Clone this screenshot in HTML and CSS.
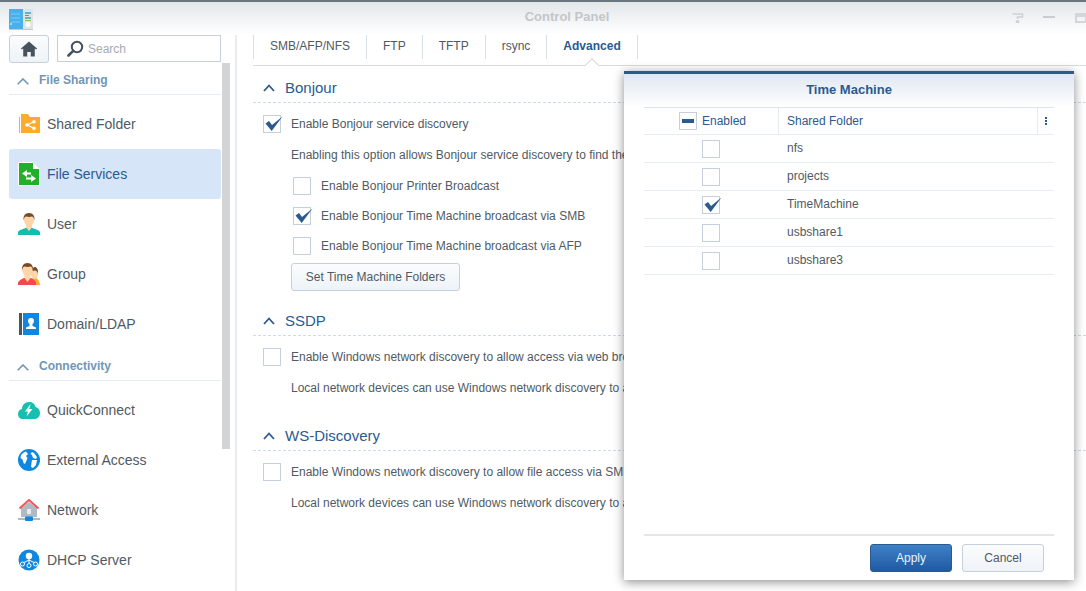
FILE: index.html
```html
<!DOCTYPE html>
<html lang="en">
<head>
<meta charset="utf-8">
<title>Control Panel</title>
<link rel="stylesheet" href="styles.css">
</head>
<body>
<div class="window">
  <header class="titlebar">
    <svg class="app-icon" width="24" height="21" viewBox="0 0 24 21">
      <rect x="0" y="0" width="24" height="20" fill="#dfe3e6"/>
      <rect x="0" y="0" width="14" height="20" fill="#49b0ea"/>
      <path d="M2 5h9M2 9h9M2 13h9" stroke="#7fcbf2" stroke-width="1"/>
      <rect x="1" y="14" width="2" height="2" fill="#9adcf7"/>
      <rect x="16" y="3" width="6" height="2" fill="#53b7d8"/>
      <rect x="16" y="6" width="4" height="1" fill="#7b8a92"/>
      <rect x="16" y="8" width="6" height="2" fill="#5fb8c8"/>
      <rect x="16" y="11" width="6" height="1" fill="#8bc34a"/>
      <circle cx="19" cy="15.500" r="2.500" fill="#fafcfc"/>
      <rect x="0" y="20" width="24" height="1" fill="#c3c9cd"/>
    </svg>
    <h1 class="title">Control Panel</h1>
    <div class="win-buttons">
      <svg width="12" height="10" viewBox="0.500 0 12 10"><path d="M1 1h10v3H6v2M5 8h2v2H5z" fill="none" stroke="#cdd0d3" stroke-width="1.500"/></svg>
      <svg class="win-min" width="12" height="2" viewBox="0 0 12 2"><rect width="12" height="2" fill="#c9ccd0"/></svg>
      <svg class="win-max" width="12" height="10" viewBox="0 0 12 10"><path d="M0 0h12v10H0z M2 4v4h8V4z" fill="#d3d6d9" fill-rule="evenodd"/></svg>
    </div>
  </header>

  <div class="body">
    <aside class="sidebar">
      <div class="tools">
        <button class="home" type="button" aria-label="Home">
          <svg width="16" height="16" viewBox="0 0 18 17"><path d="M9 0 0 8l1 1.200L2.500 8v9h4.500v-5h4v5h4.500V8L17 9.200 18 8z" fill="#46525e"/></svg>
        </button>
        <label class="search">
          <svg width="17" height="17" viewBox="0 0 17 17"><circle cx="10" cy="7" r="5.200" fill="none" stroke="#46525e" stroke-width="2"/><path d="M6.200 10.800 1.500 15.500" stroke="#46525e" stroke-width="2.600" stroke-linecap="round"/></svg>
          <span>Search</span>
        </label>
      </div>

      <div class="group-head">
        <svg class="chev-small" width="12" height="7" viewBox="0 0 12 7"><path d="M.7 6.300 6 1l5.300 5.300" fill="none" stroke="#6f97b8" stroke-width="1.600"/></svg>
        <span>File Sharing</span>
      </div>
      <a class="item">
        <svg width="22" height="22" viewBox="0 0 22 22"><path d="M0 4h1v16h21V4H12L10 1H3v3z" fill="#fbab2e"/><path d="M2 3h1v17H2z" fill="#fff"/><g fill="#fff"><circle cx="9" cy="12" r="1.800"/><circle cx="16" cy="8.800" r="1.800"/><circle cx="16" cy="15.200" r="1.800"/></g><path d="M9 12l7-3.200M9 12l7 3.200" stroke="#fff" stroke-width="1.200"/></svg>
        <span>Shared Folder</span>
      </a>
      <a class="item active">
        <svg width="22" height="24" viewBox="0 0 22 24"><path d="M.5.500h14l7 7v16H.500z" fill="#22b02a" stroke="#fff"/><path d="M15 .500v6.500h6.500z" fill="#fff"/><path d="M4 11.500 9 8v2.500h4v2H9V15z" fill="#fff"/><path d="M18 16.500 13 13v2.500H8v2h5V20z" fill="#fff"/></svg>
        <span>File Services</span>
      </a>
      <a class="item">
        <svg width="22" height="22" viewBox="0 0 22 22"><path d="M0 22v-3c1-2 5-3 7.500-4h7c2.500 1 6.500 2 7.500 4v3z" fill="#14bdb0"/><path d="M8 14.500 11 18l3-3.500V11H8z" fill="#fcd5a8"/><ellipse cx="11" cy="7" rx="5" ry="6.200" fill="#fcd5a8"/><path d="M5.600 7.500C5 3 7 0 11 0s6 3 5.400 7.500C16 5 15 3.500 14 3.500c-2 .5-4 .5-6 0-1 0-2 1.500-2.400 4z" fill="#7a4a28"/></svg>
        <span>User</span>
      </a>
      <a class="item">
        <svg width="22" height="22" viewBox="0 0 22 22"><path d="M13 22v-5l2-2h3c2 1 3.500 3 4 7z" fill="#fbab2e"/><ellipse cx="16.500" cy="11" rx="3.500" ry="5" fill="#fcd5a8"/><path d="M14 8c0-3 1.500-4 3-4s3.500 2 3 7c-.5-2-1.500-3.500-3-3.500z" fill="#7a4a28"/><path d="M0 22v-2.500C1 17 4 16 6 15h7c2 1 4 2 5 4.500V22z" fill="#f5484e"/><path d="M6.500 15 9.500 19l3-4v-4h-6z" fill="#fcd5a8"/><ellipse cx="9.500" cy="7" rx="5.200" ry="6.400" fill="#fcd5a8"/><path d="M4 7.500C3.500 3 5.500 0 9.500 0s6 3 5.500 7.500c-.5-2.500-1.500-4-2.500-4-2 .5-4 .5-6 0-1 0-2 1.500-2.500 4z" fill="#7a4a28"/></svg>
        <span>Group</span>
      </a>
      <a class="item">
        <svg width="22" height="22" viewBox="0 0 22 22"><rect x="1" width="3" height="22" fill="#4a5560"/><rect x="5" width="16" height="22" fill="#0f86e0"/><circle cx="13" cy="8" r="3" fill="#fff"/><path d="M8 16v-1.500l3.500-1.500V10h3v3l3.500 1.500V16z" fill="#fff"/></svg>
        <span>Domain/LDAP</span>
      </a>

      <div class="group-head">
        <svg class="chev-small" width="12" height="7" viewBox="0 0 12 7"><path d="M.7 6.300 6 1l5.300 5.300" fill="none" stroke="#6f97b8" stroke-width="1.600"/></svg>
        <span>Connectivity</span>
      </div>
      <a class="item">
        <svg width="22" height="18" viewBox="0 0 22 18"><path d="M5 18c-3 0-5-2-5-5s2-4.500 4-5c0-4 3-7 7-7 3.500 0 6 2 6.500 5 2.500.5 4.500 2.500 4.500 6 0 3.500-2.500 6-5.500 6z" fill="#17bfb0"/><path d="M12.500 3 7 10.500h3L8.500 15.500l6-7.500h-3.200z" fill="#fff"/></svg>
        <span>QuickConnect</span>
      </a>
      <a class="item">
        <svg width="22" height="22" viewBox="0 0 22 22"><circle cx="11" cy="11" r="11" fill="#0f86e0"/><path d="M3 6c1.500-2 3.500-3 5-3.500L10 5 8 7l1.500 2-1 2.500L7 15l-1.500-1-1-3.500L2.500 9zM14 3l2 1 3 4-1 2-3-1-1-3-1.500-1zM14 11h5l-1 5-3 3-2-1 .5-4z" fill="#fff"/></svg>
        <span>External Access</span>
      </a>
      <a class="item">
        <svg width="22" height="22" viewBox="0 0 22 22"><path d="M3 9 11 3l8 6v9H3z" fill="#afbac3"/><path d="M1.500 9.500 11 1l9.500 8.500" fill="none" stroke="#f5535a" stroke-width="2"/><rect x="9" y="10" width="4" height="5" fill="#e8ecef"/><rect y="19" width="22" height="2" fill="#afbac3"/><rect x="7" y="17.500" width="8" height="4.500" rx="1" fill="#0f86e0"/></svg>
        <span>Network</span>
      </a>
      <a class="item">
        <svg width="22" height="22" viewBox="0 0 22 22"><circle cx="11" cy="11" r="10.500" fill="#0f86e0"/><circle cx="11" cy="7" r="3.200" fill="#fff"/><path d="M11 9v5M11 11l-6 3M11 11l6 3" stroke="#fff" stroke-width="1"/><g fill="#0f86e0" stroke="#fff" stroke-width="1"><circle cx="4.500" cy="15" r="2"/><circle cx="11" cy="16.500" r="2"/><circle cx="17.500" cy="15" r="2"/></g></svg>
        <span>DHCP Server</span>
      </a>
      <div class="scrollbar"></div>
    </aside>

    <main class="content">
      <nav class="tabs">
        <a class="tab">SMB/AFP/NFS</a>
        <a class="tab">FTP</a>
        <a class="tab">TFTP</a>
        <a class="tab">rsync</a>
        <a class="tab current">Advanced</a>
      </nav>

      <section class="section">
        <h2 class="section-head">
          <svg width="12" height="8" viewBox="0 0 12 8"><path d="M1 7l5-5.500L11 7" fill="none" stroke="#2a5a90" stroke-width="1.800"/></svg>
          Bonjour
        </h2>
        <div class="row">
          <span class="cb"><svg class="tick" width="20" height="19" viewBox="0 0 20 19"><path d="M2.500 10.500 6 8l3 4L19.500 3.500 8.700 18z" fill="#2a5a90"/></svg></span>
          Enable Bonjour service discovery
        </div>
        <div class="row note">Enabling this option allows Bonjour service discovery to find the printers and Time Machine folders.</div>
        <div class="row sub">
          <span class="cb"></span>
          Enable Bonjour Printer Broadcast
        </div>
        <div class="row sub tight">
          <span class="cb"><svg class="tick" width="20" height="19" viewBox="0 0 20 19"><path d="M2.500 10.500 6 8l3 4L19.500 3.500 8.700 18z" fill="#2a5a90"/></svg></span>
          Enable Bonjour Time Machine broadcast via SMB
        </div>
        <div class="row sub tight">
          <span class="cb"></span>
          Enable Bonjour Time Machine broadcast via AFP
        </div>
        <button class="btn folders" type="button">Set Time Machine Folders</button>
      </section>

      <section class="section ssdp">
        <h2 class="section-head">
          <svg width="12" height="8" viewBox="0 0 12 8"><path d="M1 7l5-5.500L11 7" fill="none" stroke="#2a5a90" stroke-width="1.800"/></svg>
          SSDP
        </h2>
        <div class="row"><span class="cb"></span>Enable Windows network discovery to allow access via web browser</div>
        <div class="row note">Local network devices can use Windows network discovery to access this server.</div>
      </section>

      <section class="section ws">
        <h2 class="section-head">
          <svg width="12" height="8" viewBox="0 0 12 8"><path d="M1 7l5-5.500L11 7" fill="none" stroke="#2a5a90" stroke-width="1.800"/></svg>
          WS-Discovery
        </h2>
        <div class="row"><span class="cb"></span>Enable Windows network discovery to allow file access via SMB</div>
        <div class="row note">Local network devices can use Windows network discovery to access files.</div>
      </section>
    </main>
  </div>

  <div class="dialog">
    <h3 class="dialog-title">Time Machine</h3>
    <div class="table">
      <div class="tr th">
        <div class="c-enabled"><span class="cb minus"></span>Enabled</div>
        <div class="c-folder">Shared Folder</div>
        <div class="c-menu"><svg width="2" height="8" viewBox="0 0 2 8"><path d="M0 0h2v2H0zM0 3h2v2H0zM0 6h2v2H0z" fill="#2a5a90"/></svg></div>
      </div>
      <div class="tr"><div class="c-enabled"><span class="cb"></span></div><div class="c-folder">nfs</div></div>
      <div class="tr"><div class="c-enabled"><span class="cb"></span></div><div class="c-folder">projects</div></div>
      <div class="tr"><div class="c-enabled"><span class="cb"><svg class="tick" width="20" height="19" viewBox="0 0 20 19"><path d="M2.500 10.500 6 8l3 4L19.500 3.500 8.700 18z" fill="#2a5a90"/></svg></span></div><div class="c-folder">TimeMachine</div></div>
      <div class="tr"><div class="c-enabled"><span class="cb"></span></div><div class="c-folder">usbshare1</div></div>
      <div class="tr"><div class="c-enabled"><span class="cb"></span></div><div class="c-folder">usbshare3</div></div>
    </div>
    <footer class="dialog-foot">
      <button class="btn primary" type="button">Apply</button>
      <button class="btn" type="button">Cancel</button>
    </footer>
  </div>
</div>
</body>
</html>
```
FILE: styles.css
```css
* { box-sizing: border-box; }
html, body { margin: 0; height: 100%; overflow: hidden; background: #fff; }
body { font-family: "Liberation Sans", Arial, sans-serif; font-size: 12px; color: #505a64; }
.window { position: relative; width: 1086px; height: 591px; overflow: hidden; }

.titlebar { height: 35px; border-top: 2px solid #6b757f; background: linear-gradient(#e3e7ea, #fff); display: flex; align-items: center; padding: 0 0 4px 9px; position: relative; }
.app-icon { display: block; margin-top: 5px; }
.title { flex: 1; margin: 0; padding-left: 89px; text-align: center; font-size: 13px; font-weight: 700; color: #c3c6c9; }
.win-buttons { display: flex; align-items: flex-start; align-self: flex-start; gap: 19px; padding-top: 11px; margin-right: -1px; width: 75px; flex: none; overflow: hidden; }
.win-buttons svg { flex: none; }
.win-min { margin-top: 3px; }
.win-max { margin-left: 1px; }

.body { display: flex; height: 556px; }
.sidebar { position: relative; width: 237px; flex: none; padding-left: 9px; padding-right: 14px; border-right: 2px solid #e9ebed; overflow: hidden; }
.tools { display: flex; gap: 8px; height: 28px; }
.home { width: 40px; height: 28px; padding: 0; border: 1px solid #c5d0dc; border-radius: 3px; background: linear-gradient(#fbfcfd, #eef3f8); display: flex; align-items: center; justify-content: center; }
.search { width: 164px; height: 27px; border: 1px solid #c5d0dc; display: flex; align-items: center; gap: 4px; padding-left: 9px; color: #a4abb3; font-size: 12px; }
.group-head { height: 32px; border-bottom: 1px solid #e6ecf2; display: flex; align-items: center; padding: 3px 0 0 8px; color: #6f97b8; font-weight: 700; font-size: 12px; gap: 10px; }
.chev-small { margin-top: 3px; }
.group-head + .item { margin-top: 4px; }
.item { height: 50px; display: flex; align-items: center; padding-left: 9px; border-radius: 3px; font-size: 14px; color: #505a64; }
.item svg { width: 22px; flex: none; margin-right: 7px; }
.item.active { background: #d6e5f8; color: #2a5a90; }
.scrollbar { position: absolute; left: 222px; top: 28px; width: 8px; height: 386px; background: #d2d4d6; }

.content { flex: 1; padding-left: 16px; min-width: 0; }
.tabs { display: flex; height: 31px; border-bottom: 1px solid #d9dcdf; position: relative; }
.tab { height: 24px; line-height: 23px; padding: 0 16px; border-right: 1px solid #d7e0e8; color: #505a64; font-size: 12px; }
.tab:first-child { border-left: 1px solid #d7e0e8; }
.tab.current { font-weight: 700; color: #2a5a90; }
.tabs::after { content: ""; position: absolute; left: 334px; top: 25px; width: 9px; height: 9px; background: #fff; border-top: 1px solid #d9dcdf; border-left: 1px solid #d9dcdf; transform: rotate(45deg); }

.section { padding-top: 8px; }
.section.ssdp { padding-top: 16px; }
.section.ws { padding-top: 25px; }
.section-head { margin: 0; height: 29px; border-bottom: 1px dashed #d0dae3; display: flex; align-items: center; gap: 10px; padding: 0 0 1px 10px; font-size: 15px; font-weight: 400; color: #2a5a90; }
.section-head svg { flex: none; }
.row { display: flex; align-items: center; height: 18px; margin-top: 12px; padding-left: 10px; gap: 10px; white-space: nowrap; }
.row.note { margin-top: 13px; padding-left: 38px; }
.row.sub { margin-top: 13px; padding-left: 40px; }
.row.sub.tight { margin-top: 12px; }
.cb { position: relative; display: block; width: 18px; height: 18px; flex: none; border: 1px solid #c5d0dc; background: #fff; }
.tick { position: absolute; left: -1px; top: -3px; }
.cb.minus::after { content: ""; position: absolute; left: 2px; top: 6px; width: 12px; height: 4px; background: #2a5a90; }
.btn { height: 28px; min-width: 82px; padding: 0 14px; border: 1px solid #c5d0dc; border-radius: 3px; background: linear-gradient(#fbfcfd, #eef3f8); color: #505a64; font: 12px "Liberation Sans", Arial, sans-serif; }
.btn.folders { display: block; margin: 8px 0 0 38px; width: 169px; padding: 0; }
.btn.primary { background: linear-gradient(#3e81c6, #1f5aa3); border-color: #2a5a90; color: #eaf2fa; }

.dialog { position: absolute; left: 624px; top: 71px; width: 450px; height: 509px; border-top: 3px solid #2a5a90; background: #fff; box-shadow: 0 2px 10px rgba(0,0,0,.45); display: flex; flex-direction: column; }
.dialog-title { margin: 0; height: 33px; line-height: 32px; text-align: center; font-size: 13px; font-weight: 700; color: #2a5a90; background: linear-gradient(#dfe7f0, #fff); }
.table { flex: 1; margin: 0 20px; border-top: 1px solid #dfe5eb; }
.tr { display: flex; height: 28px; border-bottom: 1px solid #e6ecf2; align-items: center; }
.tr.th { height: 27px; color: #2a5a90; }
.c-enabled { width: 134px; padding-left: 58px; display: flex; align-items: center; height: 100%; }
.c-folder { flex: 1; padding: 0 0 2px 9px; height: 100%; display: flex; align-items: center; }
.th .c-enabled { padding-left: 35px; gap: 5px; border-right: 1px solid #e6ecf2; width: 135px; }
.th .c-folder { padding: 0 0 0 8px; }
.c-menu { width: 17px; height: 100%; border-left: 1px solid #e6ecf2; display: flex; align-items: center; justify-content: center; }
.dialog-foot { height: 46px; margin: 0 20px; padding: 8px 10px 0 0; border-top: 2px solid #e4e6e8; display: flex; justify-content: flex-end; gap: 10px; }
```
